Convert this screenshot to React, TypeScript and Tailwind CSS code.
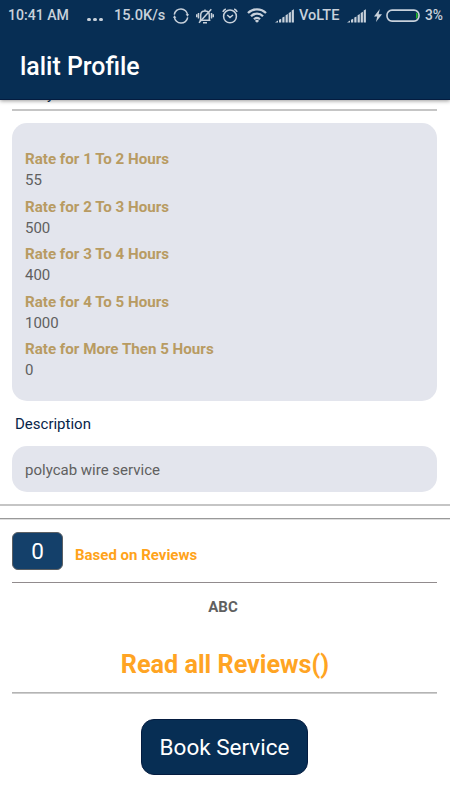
import React from "react";

const rates = [
  { label: "Rate for 1 To 2 Hours", value: "55" },
  { label: "Rate for 2 To 3 Hours", value: "500" },
  { label: "Rate for 3 To 4 Hours", value: "400" },
  { label: "Rate for 4 To 5 Hours", value: "1000" },
  { label: "Rate for More Then 5 Hours", value: "0" },
];

function SyncIcon() {
  return (
    <svg className="ml-[7px] h-4 w-4 shrink-0" viewBox="0 0 16 16" fill="none" stroke="currentColor" strokeWidth="1.5">
      <path d="M1.300 6.600A6.700 6.700 0 0 1 14.600 7M14.700 9.400A6.700 6.700 0 0 1 1.400 9" />
      <path d="M12.600 6.300H16L14.600 8.800zM0 9.700h3.400L1.400 7.200z" fill="currentColor" stroke="none" />
    </svg>
  );
}

function MutedBellIcon() {
  return (
    <svg className="ml-[7px] h-4 w-[18px] shrink-0" viewBox="0 0 18 16" fill="none" stroke="currentColor" strokeWidth="1.5">
      <path d="M3.600 12.300h10.800M4.700 12V7.200C4.700 4.500 6.300 3 9 3s4.300 1.500 4.300 4.200V12M7 14.700h4M9 1.500V3" />
      <path d="M2.500 5v5.500M15.500 5v5.500M.7 6.300v3M17.300 6.300v3" />
      <path d="M3 14.800 15.300 1.300" />
    </svg>
  );
}

function AlarmIcon() {
  return (
    <svg className="ml-[8px] h-4 w-4 shrink-0" viewBox="0 0 16 16" fill="none" stroke="currentColor" strokeWidth="1.500">
      <circle cx="8" cy="8.400" r="6.400" />
      <path d="M.8 3.800A6 6 0 0 1 3.800 1M12.200 1a6 6 0 0 1 3 2.800M5.200 7 8 9.600 11 7" />
    </svg>
  );
}

function WifiIcon() {
  return (
    <svg className="ml-[9px] h-[15px] w-5 shrink-0" viewBox="0 0 20 15" fill="none" stroke="currentColor" strokeWidth="2.300">
      <path d="M1 5a12.800 12.800 0 0 1 18 0M4 8.200a8.500 8.500 0 0 1 12 0M7 11.200a4.300 4.300 0 0 1 6 0" />
      <path d="M10 14.800 7.900 12.900a3 3 0 0 1 4.200 0z" fill="currentColor" stroke="none" />
    </svg>
  );
}

function SignalIcon() {
  return (
    <svg className="h-[14px] w-[19px] shrink-0" viewBox="0 0 19 14" fill="currentColor">
      <path d="M0 13.500 3 11.500v2zM4 10.800l2.200-1v3.700H4zM7.300 8.600l2.200-1.200v6.100H7.300zM10.600 6.300l2.200-1.200v8.400h-2.200zM13.700 4l2.200-1.200v10.700h-2.200zM16.700 1.500l2.200-1.200v13.200h-2.200z" />
    </svg>
  );
}

function BatteryIcon() {
  return (
    <svg className="h-[14px] w-[34px] shrink-0" viewBox="0 0 34 14" fill="none">
      <rect x="1" y="1.100" width="32" height="11" rx="5" stroke="currentColor" strokeWidth="1.600" />
      <path d="M30 3.300v6.700l1.700-1.500V4.800z" fill="#20b32a" />
    </svg>
  );
}

function StatusBar() {
  return (
    <div className="flex h-[31px] items-center whitespace-nowrap pl-2 text-[14.500px] font-medium text-[#c8d1db]">
      <span className="w-[79px] text-[14.100px]">10:41 AM</span>
      <span className="flex w-[27px] gap-[2px] pt-[7px]">
        <i className="h-[3px] w-[4px] rounded-full bg-[#c8d1db]" />
        <i className="h-[3px] w-[4px] rounded-full bg-[#c8d1db]" />
        <i className="h-[3px] w-[4px] rounded-full bg-[#c8d1db]" />
      </span>
      <span className="w-[52px] text-[14.600px]">15.0K/s</span>
      <SyncIcon />
      <MutedBellIcon />
      <AlarmIcon />
      <WifiIcon />
      <span className="ml-[8px] flex"><SignalIcon /></span>
      <span className="ml-[5px] w-[42px]">VoLTE</span>
      <span className="ml-[6px] flex"><SignalIcon /></span>
      <svg className="ml-[8px] h-[13px] w-[8px] shrink-0" viewBox="0 0 8 13" fill="currentColor">
        <path d="M5.800 0 0 7.500h3.200L2 13 8 5.300H4.600z" />
      </svg>
      <span className="ml-[4px] flex"><BatteryIcon /></span>
      <span className="ml-[5px] text-[13.800px]">3%</span>
    </div>
  );
}

export default function App() {
  return (
    <div className="flex h-[800px] w-[450px] flex-col overflow-hidden bg-white font-['Roboto','Liberation_Sans',sans-serif] text-[#606060]">
      <header className="relative z-10 h-[100px] shrink-0 border-b border-[#041c40] bg-[#072e54] shadow-[0_1px_4px_rgba(0,0,0,0.4)]">
        <StatusBar />
        <h1 className="mt-[18px] pl-5 text-[24.900px] font-medium leading-9 text-white">lalit Profile</h1>
      </header>

      <main className="flex flex-col">
        <div className="-mt-[16px] h-[25px] pl-[47px] text-[15px] leading-5 text-[#072e54]">y</div>
        <div className="ml-[12px] h-[2px] w-[425px] bg-[#c5c5c5]" />
        <section className="ml-[12px] mt-[12px] h-[278px] w-[425px] rounded-[15px] bg-[#e3e5ed] px-[13px] pt-[26px]">
          {rates.map((rate) => (
            <div key={rate.label} className="h-[47.500px] text-[15px]">
              <div className="h-[21px] text-[15.150px] font-bold leading-[21px] text-[#b89b62]">{rate.label}</div>
              <div className="leading-5">{rate.value}</div>
            </div>
          ))}
        </section>
        <h2 className="mt-[13px] h-[32px] pl-[15px] text-[15px] leading-5 text-[#072449]">Description</h2>
        <div className="ml-[12px] flex h-[46px] w-[425px] items-center rounded-[15px] bg-[#e3e5ed] px-[13px] pt-[2px] text-[15px]">polycab wire service</div>
        <div className="mt-[12px] h-[2px] bg-[#c5c5c5]" />
        <div className="mt-[12px] h-[2px] border-t border-[#999] bg-[#dedede]" />
        <div className="mt-3 flex pl-[12px]">
          <div className="flex h-[38px] w-[51px] items-center justify-center rounded-[6px] border border-[#5c6064] bg-[#14406a] pt-px text-[22.500px] text-white">0</div>
          <span className="ml-[12px] pt-[13px] text-[15px] font-bold leading-5 text-[#ffa31a]">Based on Reviews</span>
        </div>
        <div className="ml-[12px] mt-[12px] h-px w-[425px] bg-[#918b8d]" />
        <div className="mt-[14px] pr-1 text-center text-[15px] font-bold leading-5">ABC</div>
        <a className="mt-[30px] text-center text-[25.200px] font-bold leading-9 text-[#ffa423]">Read all Reviews()</a>
        <div className="ml-[12px] mt-[9px] h-[2px] w-[425px] border-t border-[#b4b4b4] bg-[#cecece]" />
        <button className="ml-[141px] mt-[25px] h-[56px] w-[167px] rounded-[13px] border border-[#041c40] bg-[#072e54] pt-[2px] text-[22.500px] text-white">Book Service</button>
      </main>
    </div>
  );
}
